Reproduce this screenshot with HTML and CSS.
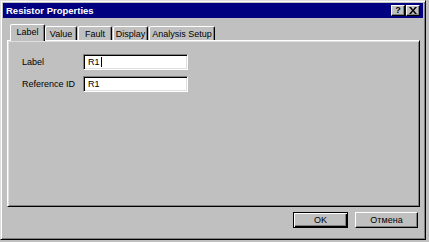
FILE: index.html
```html
<!DOCTYPE html>
<html>
<head>
<meta charset="utf-8">
<link rel="stylesheet" href="styles.css">
</head>
<body>
<div class="window">
  <div class="titlebar">
    <span class="title">Resistor Properties</span>
    <div class="title-btns">
      <span class="tbtn help">?</span>
      <span class="tbtn close"><svg width="8" height="7" viewBox="0 0 8 7"><path d="M0 0h2l2 2.5L6 0h2L5 3.5 8 7H6L4 4.5 2 7H0l3-3.5z" fill="#000"/></svg></span>
    </div>
  </div>
  <div class="tabs">
    <div class="tab active tab-label">Label</div>
    <div class="tab tab-value">Value</div>
    <div class="tab tab-fault">Fault</div>
    <div class="tab tab-display">Display</div>
    <div class="tab tab-analysis">Analysis Setup</div>
  </div>
  <div class="panel">
    <div class="row">
      <span class="lbl">Label</span>
      <div class="field">R1<span class="caret"></span></div>
    </div>
    <div class="row">
      <span class="lbl">Reference ID</span>
      <div class="field">R1</div>
    </div>
  </div>
  <div class="footer">
    <button class="btn default">OK</button>
    <button class="btn cancel">Отмена</button>
  </div>
</div>
</body>
</html>
```

FILE: styles.css
```css
html, body {
  margin: 0;
  padding: 0;
  background: #c0c0c0;
}
body {
  width: 429px;
  height: 242px;
  overflow: hidden;
  font-family: "Liberation Sans", Arial, sans-serif;
  font-size: 9px;
  color: #000;
}
.window {
  box-sizing: border-box;
  width: 426px;
  height: 240px;
  border: 1px solid;
  border-color: #dfdfdf #000 #000 #dfdfdf;
  box-shadow: inset 1px 1px #fff, inset -1px -1px #808080;
  padding: 2px;
  background: #c0c0c0;
  display: flex;
  flex-direction: column;
}
.titlebar {
  height: 15px;
  background: #000080;
  display: flex;
  align-items: center;
  justify-content: space-between;
  padding: 0 3px 0 3px;
}
.title {
  color: #fff;
  font-weight: bold;
  font-size: 9.5px;
}
.title-btns {
  display: flex;
  gap: 1px;
}
.tbtn {
  box-sizing: border-box;
  width: 14px;
  height: 11px;
  background: #c0c0c0;
  border: 1px solid;
  border-color: #fff #000 #000 #fff;
  box-shadow: inset -1px -1px #808080;
  display: flex;
  align-items: center;
  justify-content: center;
  font-weight: bold;
  font-size: 9px;
  line-height: 1;
}
.tabs {
  display: flex;
  align-items: flex-start;
  margin: 6px 0 0 7px;
  position: relative;
  z-index: 2;
  height: 17px;
}
.tab {
  box-sizing: border-box;
  height: 14px;
  margin-top: 2px;
  border: 1px solid;
  border-bottom: none;
  border-color: #fff #000 transparent #fff;
  box-shadow: inset -1px 0 #808080;
  border-radius: 2px 2px 0 0;
  background: #c0c0c0;
  display: flex;
  align-items: center;
  justify-content: center;
  white-space: nowrap;
}
.tab.active {
  height: 17px;
  margin-top: 0;
  padding-bottom: 2px;
}
.tab-label { width: 35px; }
.tab-value { width: 32px; }
.tab-fault { width: 34px; margin-left: 1px; }
.tab-display { width: 35px; margin-left: 1px; }
.tab-analysis { width: 66px; margin-left: 1px; }
.panel {
  box-sizing: border-box;
  margin: -1px 0 0 4px;
  width: 413px;
  height: 167px;
  border: 1px solid;
  border-color: #fff #000 #000 #fff;
  box-shadow: inset 1px 1px #dfdfdf, inset -1px -1px #808080;
  padding: 13px 0 0 14px;
  display: flex;
  flex-direction: column;
  gap: 6px;
  position: relative;
  z-index: 1;
}
.row {
  display: flex;
  align-items: center;
  height: 16px;
}
.lbl {
  width: 61px;
}
.field {
  box-sizing: border-box;
  width: 105px;
  height: 16px;
  background: #fff;
  border: 1px solid;
  border-color: #808080 #fff #fff #808080;
  box-shadow: inset 1px 1px #000, inset -1px -1px #dfdfdf;
  padding: 0 0 0 4px;
  display: flex;
  align-items: center;
}
.caret {
  display: inline-block;
  width: 1px;
  height: 10px;
  background: #000;
  margin-left: 1px;
}
.footer {
  display: flex;
  justify-content: flex-end;
  gap: 7px;
  margin: 5px 0 0 0;
  padding-right: 5px;
}
.btn {
  box-sizing: border-box;
  height: 16px;
  font-family: "Liberation Sans", Arial, sans-serif;
  font-size: 9px;
  color: #000;
  background: #c0c0c0;
  border: 1px solid;
  border-color: #fff #000 #000 #fff;
  box-shadow: inset -1px -1px #808080;
  padding: 0;
}
.btn.default {
  width: 55px;
  border-color: #000;
  box-shadow: inset 1px 1px #fff, inset -1px -1px #000, inset -2px -2px #808080;
}
.btn.cancel {
  width: 63px;
}
```
